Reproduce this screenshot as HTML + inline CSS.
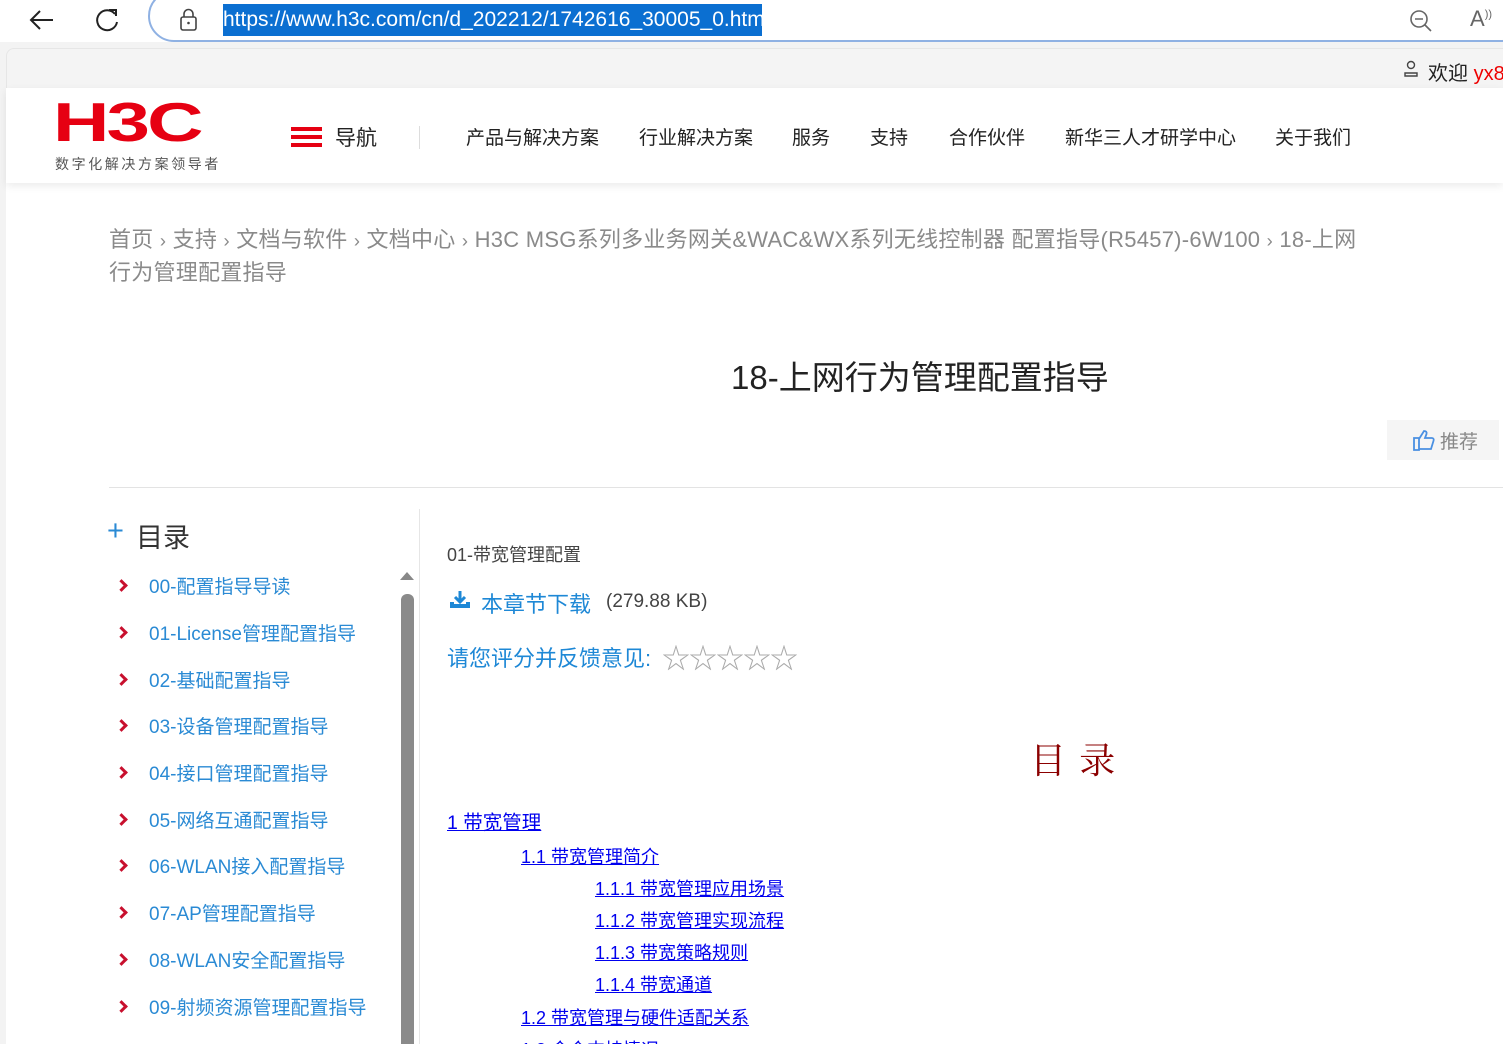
<!DOCTYPE html>
<html><head><meta charset="utf-8"><style>
*{margin:0;padding:0;box-sizing:border-box}
html,body{width:1503px;height:1044px;overflow:hidden}
body{background:#f3f3f3;font-family:"Liberation Sans","Noto Sans CJK SC",sans-serif;position:relative}
.a{position:absolute;white-space:nowrap}
.page{position:absolute;left:6px;top:88px;width:1497px;height:956px;background:#fff}
.nav span{position:absolute;top:123px;font-size:19px;color:#222}
.sb{position:absolute;left:149px;font-size:19px;color:#2a8ad4}
.ch{position:absolute;left:117px;width:9px;height:9px;border-right:3px solid #c8102e;border-top:3px solid #c8102e;transform:rotate(45deg)}
.toc{position:absolute;color:#0000ee;text-decoration:underline;font-size:18px;font-family:"Liberation Sans","WenQuanYi Zen Hei",sans-serif}
</style></head><body>
<div class="a" style="left:0;top:0;width:1503px;height:42px;background:#fff"></div>
<svg class="a" style="left:28px;top:8px" width="28" height="24" viewBox="0 0 28 24"><path d="M25 12H4M12 3L3 12l9 9" fill="none" stroke="#222" stroke-width="2"/></svg>
<svg class="a" style="left:94px;top:6px" width="28" height="28" viewBox="0 0 28 28"><path d="M21 8A10 10 0 1 0 23 16" fill="none" stroke="#222" stroke-width="2"/><path d="M15 4h7v-1M22 3v7" fill="none" stroke="#222" stroke-width="2"/></svg>
<div class="a" style="left:148px;top:-10px;width:1380px;height:52px;border:2px solid #8fb1e3;border-radius:26px;background:#fff"></div>
<svg class="a" style="left:178px;top:8px" width="22" height="24" viewBox="0 0 22 24"><rect x="3" y="9" width="15" height="13" rx="2" fill="none" stroke="#444" stroke-width="1.6"/><path d="M6 9V6a4.5 4.5 0 0 1 9 0v3" fill="none" stroke="#444" stroke-width="1.6"/><circle cx="10.5" cy="15" r="1.3" fill="#444"/></svg>
<div class="a" style="left:223px;top:4px;height:32px;width:539px;background:#0b6fd1;color:#fff;font-size:21px;line-height:32px;overflow:hidden">https://www.h3c.com/cn/d_202212/1742616_30005_0.htm</div>
<svg class="a" style="left:1408px;top:8px" width="26" height="26" viewBox="0 0 26 26"><circle cx="11" cy="11" r="8" fill="none" stroke="#666" stroke-width="1.6"/><path d="M7 11h8M17 17l6 6" stroke="#666" stroke-width="1.6"/></svg>
<div class="a" style="left:1470px;top:6px;font-size:22px;color:#666">A<sup style="font-size:11px">))</sup></div>
<div class="a" style="left:6px;top:48px;width:1497px;height:40px;background:#f4f4f4;border-top-left-radius:8px;border-top:1px solid #e6e6e6;border-left:1px solid #e6e6e6"></div>
<svg class="a" style="left:1403px;top:60px" width="16" height="18" viewBox="0 0 16 18"><circle cx="8" cy="5" r="3.5" fill="none" stroke="#444" stroke-width="1.4"/><path d="M2 16v-3h12v3z" fill="none" stroke="#444" stroke-width="1.4"/></svg>
<div class="a" style="left:1428px;top:57px;font-size:20px;color:#222">欢迎 <span style="color:#e00">yx8</span></div>
<div class="page"></div>
<div class="a" style="left:6px;top:88px;width:1497px;height:95px;background:#fff;box-shadow:0 3px 8px rgba(0,0,0,.08)"></div>
<div class="a" style="left:53px;top:90px;font-size:55px;font-weight:bold;color:#e60012;letter-spacing:-2px;transform:scaleX(1.42);transform-origin:left;line-height:64px;font-family:'Liberation Sans',sans-serif">H3C</div>
<div class="a" style="left:55px;top:154px;font-size:14px;color:#555;letter-spacing:2.6px">数字化解决方案领导者</div>
<div class="a" style="left:291px;top:127px;width:31px;height:4px;background:#e60012;box-shadow:0 8px 0 #e60012,0 16px 0 #e60012"></div>
<div class="a" style="left:335px;top:122px;font-size:21px;color:#222">导航</div>
<div class="a" style="left:419px;top:126px;width:1px;height:23px;background:#ddd"></div>
<div class="nav"><span style="left:466px">产品与解决方案</span><span style="left:639px">行业解决方案</span><span style="left:792px">服务</span><span style="left:870px">支持</span><span style="left:949px">合作伙伴</span><span style="left:1065px">新华三人才研学中心</span><span style="left:1275px">关于我们</span></div>
<div class="a" style="left:109px;top:224px;font-size:22px;color:#8a8a8a;line-height:32px;white-space:normal;width:1262px;letter-spacing:0.25px">首页 <small>›</small> 支持 <small>›</small> 文档与软件 <small>›</small> 文档中心 <small>›</small> H3C MSG系列多业务网关&amp;WAC&amp;WX系列无线控制器 配置指导(R5457)-6W100 <small>›</small> 18-上网行为管理配置指导</div>
<div class="a" style="left:731px;top:351px;font-size:33px;color:#222">18-上网行为管理配置指导</div>
<div class="a" style="left:1387px;top:420px;width:112px;height:40px;background:#f5f5f5"></div>
<svg class="a" style="left:1412px;top:428px" width="24" height="24" viewBox="0 0 24 24"><path d="M2 10h5v12H2zM7 11l5-8c2 0 3 1 2.5 3L13 10h7c1.5 0 2 1.5 1.6 2.5L19 21H7" fill="none" stroke="#4a90e2" stroke-width="1.8"/></svg>
<div class="a" style="left:1440px;top:427px;font-size:19px;color:#888">推荐</div>
<div class="a" style="left:109px;top:487px;width:1394px;height:1px;background:#e3e3e3"></div>
<div class="a" style="left:107px;top:515px;font-size:29px;color:#2a8ad4;font-weight:300">+</div>
<div class="a" style="left:136px;top:516px;font-size:27px;color:#333">目录</div>
<div class="sb" style="top:572px">00-配置指导导读</div><div class="ch" style="top:581px"></div>
<div class="sb" style="top:619px">01-License管理配置指导</div><div class="ch" style="top:628px"></div>
<div class="sb" style="top:666px">02-基础配置指导</div><div class="ch" style="top:675px"></div>
<div class="sb" style="top:712px">03-设备管理配置指导</div><div class="ch" style="top:721px"></div>
<div class="sb" style="top:759px">04-接口管理配置指导</div><div class="ch" style="top:768px"></div>
<div class="sb" style="top:806px">05-网络互通配置指导</div><div class="ch" style="top:815px"></div>
<div class="sb" style="top:852px">06-WLAN接入配置指导</div><div class="ch" style="top:861px"></div>
<div class="sb" style="top:899px">07-AP管理配置指导</div><div class="ch" style="top:908px"></div>
<div class="sb" style="top:946px">08-WLAN安全配置指导</div><div class="ch" style="top:955px"></div>
<div class="sb" style="top:993px">09-射频资源管理配置指导</div><div class="ch" style="top:1002px"></div>
<div class="a" style="left:400px;top:572px;width:0;height:0;border-left:7px solid transparent;border-right:7px solid transparent;border-bottom:8px solid #888"></div>
<div class="a" style="left:401px;top:594px;width:13px;height:460px;background:#8a8a8a;border-radius:6px"></div>
<div class="a" style="left:419px;top:509px;width:1px;height:535px;background:#e6e6e6"></div>
<div class="a" style="left:447px;top:541px;font-size:18px;color:#444">01-带宽管理配置</div>
<svg class="a" style="left:449px;top:590px" width="22" height="20" viewBox="0 0 22 20"><path d="M11 1v10M6 7l5 5 5-5" fill="none" stroke="#1e88d6" stroke-width="3"/><path d="M1 12v6h20v-6h-4v2H5v-2z" fill="#1e88d6"/></svg>
<div class="a" style="left:481px;top:587px;font-size:22px;color:#1e88d6">本章节下载</div>
<div class="a" style="left:606px;top:591px;font-size:19px;color:#444">(279.88 KB)</div>
<div class="a" style="left:447px;top:641px;font-size:22px;color:#1e88d6">请您评分并反馈意见:</div>
<div class="a" style="left:662px;top:637px;font-size:28px;color:#aaa;letter-spacing:-1px">☆☆☆☆☆</div>
<div class="a" style="left:1030px;top:733px;font-size:36px;color:#8b0000;letter-spacing:2px;font-family:'Noto Serif CJK SC',serif">目 录</div>
<div class="toc" style="left:447px;top:806px;font-size:19.5px">1 带宽管理</div>
<div class="toc" style="left:521px;top:843px">1.1 带宽管理简介</div>
<div class="toc" style="left:595px;top:875px">1.1.1 带宽管理应用场景</div>
<div class="toc" style="left:595px;top:907px">1.1.2 带宽管理实现流程</div>
<div class="toc" style="left:595px;top:939px">1.1.3 带宽策略规则</div>
<div class="toc" style="left:595px;top:971px">1.1.4 带宽通道</div>
<div class="toc" style="left:521px;top:1004px">1.2 带宽管理与硬件适配关系</div>
<div class="toc" style="left:521px;top:1036px">1.3 命令支持情况</div>
</body></html>
